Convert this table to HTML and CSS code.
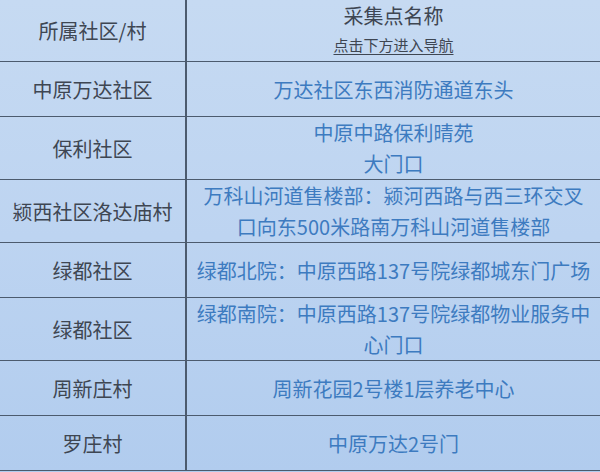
FILE: index.html
```html
<!DOCTYPE html>
<html lang="zh-CN">
<head>
<meta charset="utf-8">
<link rel="stylesheet" href="styles.css">
</head>
<body>
<table class="sites">
  <colgroup><col class="c-area"><col class="c-site"></colgroup>
  <thead>
    <tr>
      <th class="area">所属社区/村</th>
      <th class="site-head">
        <div class="title">采集点名称</div>
        <div class="hint">点击下方进入导航</div>
      </th>
    </tr>
  </thead>
  <tbody>
    <tr><td class="area">中原万达社区</td><td class="site">万达社区东西消防通道东头</td></tr>
    <tr><td class="area">保利社区</td><td class="site">中原中路保利晴苑<br>大门口</td></tr>
    <tr><td class="area">颍西社区洛达庙村</td><td class="site">万科山河道售楼部：颍河西路与西三环交叉口向东500米路南万科山河道售楼部</td></tr>
    <tr><td class="area">绿都社区</td><td class="site">绿都北院：中原西路137号院绿都城东门广场</td></tr>
    <tr><td class="area">绿都社区</td><td class="site">绿都南院：中原西路137号院绿都物业服务中心门口</td></tr>
    <tr><td class="area">周新庄村</td><td class="site">周新花园2号楼1层养老中心</td></tr>
    <tr><td class="area">罗庄村</td><td class="site">中原万达2号门</td></tr>
  </tbody>
</table>
</body>
</html>
```

FILE: styles.css
```css
html, body {
  margin: 0;
  padding: 0;
  background: #b8d0ef;
}
body {
  width: 600px;
  height: 472px;
  overflow: hidden;
  font-family: "Noto Sans CJK SC", "Noto Sans", sans-serif;
  background: linear-gradient(to bottom, #c6daf2 0%, #bdd4f1 50%, #b1ccee 100%);
}
.sites {
  width: 600px;
  border-collapse: collapse;
  table-layout: fixed;
}
.c-area { width: 186px; }
.c-site { width: 414px; }
th, td {
  height: 54px;
  padding: 0 8px;
  font-size: 20px;
  font-weight: normal;
  line-height: 31px;
  text-align: center;
  vertical-align: middle;
  border-bottom: 1px solid #4c5b6e;
}
.area {
  color: #3e4652;
  border-right: 2px solid #4c5b6e;
}
.site {
  color: #3d7bc0;
}
.sites thead th {
  height: 61px;
  color: #3e4652;
}
.site-head .title {
  line-height: 28px;
  padding-top: 1px;
}
.site-head .hint {
  font-size: 15px;
  line-height: 30px;
  color: #3e4652;
  text-decoration: underline;
  text-underline-offset: 3px;
}
```
